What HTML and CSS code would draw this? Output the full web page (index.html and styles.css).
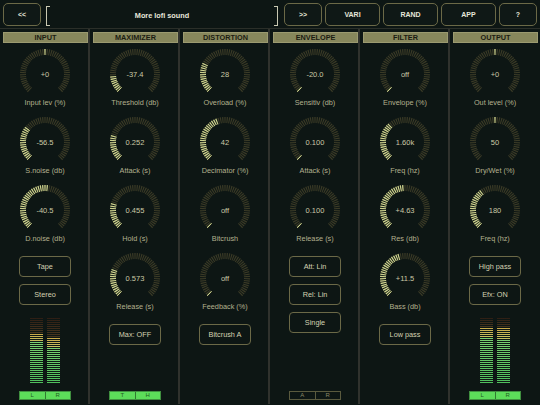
FILE: index.html
```html
<!DOCTYPE html>
<html>

<head>
  <title>Lofi</title>
  <link rel="stylesheet" href="styles.css">
</head>

<body>
  <svg class="defs" width="0" height="0">
    <symbol id="ticks" viewBox="0 0 50 50">
      <path d="M 9.855 40.959 A 22 22 0 1 1 40.145 40.959" fill="none" stroke="currentColor" stroke-width="6" pathLength="273" stroke-dasharray="3 2.4" />
    </symbol>
  </svg>

  <div class="topbar">
    <button class="tbtn narrow">&lt;&lt;</button>
    <div class="preset">
      <span class="brk brk_left"></span>
      <span class="preset_name">More lofi sound</span>
      <span class="brk brk_right"></span>
    </div>
    <button class="tbtn narrow">&gt;&gt;</button>
    <button class="tbtn wide">VARI</button>
    <button class="tbtn wide">RAND</button>
    <button class="tbtn wide">APP</button>
    <button class="tbtn narrow">?</button>
  </div>

  <div class="panel">
    <div class="col">
      <div class="head">INPUT</div>
      <div class="ctl">
        <div class="knob" style="--a:133.8deg;--b:139.2deg"><svg class="ring"><use href="#ticks"/></svg><svg class="ring lit"><use href="#ticks"/></svg><span>+0</span></div>
        <div class="lbl">Input lev (%)</div>
      </div>
      <div class="ctl">
        <div class="knob" style="--a:0deg;--b:85.2deg"><svg class="ring"><use href="#ticks"/></svg><svg class="ring lit"><use href="#ticks"/></svg><span>-56.5</span></div>
        <div class="lbl">S.noise (db)</div>
      </div>
      <div class="ctl">
        <div class="knob" style="--a:0deg;--b:144.6deg"><svg class="ring"><use href="#ticks"/></svg><svg class="ring lit"><use href="#ticks"/></svg><span>-40.5</span></div>
        <div class="lbl">D.noise (db)</div>
      </div>
      <button class="btn first">Tape</button>
      <button class="btn">Stereo</button>
      <div class="foot">
        <div class="meters">
          <div class="bar" style="--top:16px;--mid:24px"></div>
          <div class="bar" style="--top:20px;--mid:29px"></div>
        </div>
        <div class="lr"><span>L</span><span>R</span></div>
      </div>
    </div>

    <div class="col">
      <div class="head">MAXIMIZER</div>
      <div class="ctl">
        <div class="knob" style="--a:0deg;--b:42deg"><svg class="ring"><use href="#ticks"/></svg><svg class="ring lit"><use href="#ticks"/></svg><span>-37.4</span></div>
        <div class="lbl">Threshold (db)</div>
      </div>
      <div class="ctl">
        <div class="knob" style="--a:0deg;--b:63.6deg"><svg class="ring"><use href="#ticks"/></svg><svg class="ring lit"><use href="#ticks"/></svg><span>0.252</span></div>
        <div class="lbl">Attack (s)</div>
      </div>
      <div class="ctl">
        <div class="knob" style="--a:0deg;--b:63.6deg"><svg class="ring"><use href="#ticks"/></svg><svg class="ring lit"><use href="#ticks"/></svg><span>0.455</span></div>
        <div class="lbl">Hold (s)</div>
      </div>
      <div class="ctl">
        <div class="knob" style="--a:0deg;--b:69deg"><svg class="ring"><use href="#ticks"/></svg><svg class="ring lit"><use href="#ticks"/></svg><span>0.573</span></div>
        <div class="lbl">Release (s)</div>
      </div>
      <button class="btn first">Max: OFF</button>
      <div class="foot">
        <div class="lr"><span>T</span><span>H</span></div>
      </div>
    </div>

    <div class="col">
      <div class="head">DISTORTION</div>
      <div class="ctl">
        <div class="knob" style="--a:0deg;--b:74.4deg"><svg class="ring"><use href="#ticks"/></svg><svg class="ring lit"><use href="#ticks"/></svg><span>28</span></div>
        <div class="lbl">Overload (%)</div>
      </div>
      <div class="ctl">
        <div class="knob" style="--a:0deg;--b:117.6deg"><svg class="ring"><use href="#ticks"/></svg><svg class="ring lit"><use href="#ticks"/></svg><span>42</span></div>
        <div class="lbl">Decimator (%)</div>
      </div>
      <div class="ctl">
        <div class="knob" style="--a:0deg;--b:4.2deg"><svg class="ring"><use href="#ticks"/></svg><svg class="ring lit"><use href="#ticks"/></svg><span>off</span></div>
        <div class="lbl">Bitcrush</div>
      </div>
      <div class="ctl">
        <div class="knob" style="--a:0deg;--b:4.2deg"><svg class="ring"><use href="#ticks"/></svg><svg class="ring lit"><use href="#ticks"/></svg><span>off</span></div>
        <div class="lbl">Feedback (%)</div>
      </div>
      <button class="btn first">Bitcrush A</button>
    </div>

    <div class="col">
      <div class="head">ENVELOPE</div>
      <div class="ctl">
        <div class="knob" style="--a:0deg;--b:4.2deg"><svg class="ring"><use href="#ticks"/></svg><svg class="ring lit"><use href="#ticks"/></svg><span>-20.0</span></div>
        <div class="lbl">Sensitiv (db)</div>
      </div>
      <div class="ctl">
        <div class="knob" style="--a:0deg;--b:4.2deg"><svg class="ring"><use href="#ticks"/></svg><svg class="ring lit"><use href="#ticks"/></svg><span>0.100</span></div>
        <div class="lbl">Attack (s)</div>
      </div>
      <div class="ctl">
        <div class="knob" style="--a:0deg;--b:4.2deg"><svg class="ring"><use href="#ticks"/></svg><svg class="ring lit"><use href="#ticks"/></svg><span>0.100</span></div>
        <div class="lbl">Release (s)</div>
      </div>
      <button class="btn first">Att: Lin</button>
      <button class="btn">Rel: Lin</button>
      <button class="btn">Single</button>
      <div class="foot">
        <div class="lr off"><span>A</span><span>R</span></div>
      </div>
    </div>

    <div class="col">
      <div class="head">FILTER</div>
      <div class="ctl">
        <div class="knob" style="--a:0deg;--b:4.2deg"><svg class="ring"><use href="#ticks"/></svg><svg class="ring lit"><use href="#ticks"/></svg><span>off</span></div>
        <div class="lbl">Envelope (%)</div>
      </div>
      <div class="ctl">
        <div class="knob" style="--a:0deg;--b:96deg"><svg class="ring"><use href="#ticks"/></svg><svg class="ring lit"><use href="#ticks"/></svg><span>1.60k</span></div>
        <div class="lbl">Freq (hz)</div>
      </div>
      <div class="ctl">
        <div class="knob" style="--a:0deg;--b:133.8deg"><svg class="ring"><use href="#ticks"/></svg><svg class="ring lit"><use href="#ticks"/></svg><span>+4.63</span></div>
        <div class="lbl">Res (db)</div>
      </div>
      <div class="ctl">
        <div class="knob" style="--a:0deg;--b:123deg"><svg class="ring"><use href="#ticks"/></svg><svg class="ring lit"><use href="#ticks"/></svg><span>+11.5</span></div>
        <div class="lbl">Bass (db)</div>
      </div>
      <button class="btn first">Low pass</button>
    </div>

    <div class="col">
      <div class="head">OUTPUT</div>
      <div class="ctl">
        <div class="knob" style="--a:133.8deg;--b:139.2deg"><svg class="ring"><use href="#ticks"/></svg><svg class="ring lit"><use href="#ticks"/></svg><span>+0</span></div>
        <div class="lbl">Out level (%)</div>
      </div>
      <div class="ctl">
        <div class="knob" style="--a:133.8deg;--b:139.2deg"><svg class="ring"><use href="#ticks"/></svg><svg class="ring lit"><use href="#ticks"/></svg><span>50</span></div>
        <div class="lbl">Dry/Wet (%)</div>
      </div>
      <div class="ctl">
        <div class="knob" style="--a:0deg;--b:101.4deg"><svg class="ring"><use href="#ticks"/></svg><svg class="ring lit"><use href="#ticks"/></svg><span>180</span></div>
        <div class="lbl">Freq (hz)</div>
      </div>
      <button class="btn first">High pass</button>
      <button class="btn">Efx: ON</button>
      <div class="foot">
        <div class="meters">
          <div class="bar" style="--top:9px;--mid:20px"></div>
          <div class="bar" style="--top:10px;--mid:21px"></div>
        </div>
        <div class="lr"><span>L</span><span>R</span></div>
      </div>
    </div>
  </div>
</body>

</html>
```

FILE: styles.css
```css
body {
  margin: 0;
  width: 540px;
  height: 405px;
  overflow: hidden;
  background-color: #0d1614;
  font-family: "Liberation Sans", Arial, sans-serif;
}
.defs {
  position: absolute;
  width: 0;
  height: 0;
}

/* top bar */
.topbar {
  display: flex;
  gap: 3px;
  height: 29px;
  padding: 3px 3px 0 3px;
  box-sizing: border-box;
  border-bottom: 1px solid #2b2f29;
}
.tbtn {
  height: 23px;
  padding: 0;
  background-color: #0f1816;
  border: 1px solid #6b6947;
  border-radius: 5px;
  color: #e6e6da;
  font-family: inherit;
  font-size: 7px;
  font-weight: bold;
}
.narrow {
  width: 38px;
}
.wide {
  width: 55px;
}
.preset {
  flex: 1;
  display: flex;
  align-items: center;
  padding: 0 3px 0 2px;
}
.brk {
  width: 3px;
  height: 18px;
  border: 1.5px solid #c9c8b2;
}
.brk_left {
  border-right: none;
}
.brk_right {
  border-left: none;
}
.preset_name {
  flex: 1;
  text-align: center;
  color: #e8e8dc;
  font-size: 7.3px;
  font-weight: bold;
}

/* columns */
.panel {
  display: grid;
  grid-template-columns: repeat(6, 90px);
  height: 375px;
}
.col {
  display: flex;
  flex-direction: column;
  align-items: center;
  padding-bottom: 4px;
  box-sizing: border-box;
  box-shadow: inset -2px 0 #30322d;
}
.col:last-child {
  box-shadow: none;
}
.head {
  align-self: stretch;
  margin: 3px 2px 6px 3px;
  height: 11px;
  box-sizing: border-box;
  background-color: #87875c;
  border: 1px solid #9b9a70;
  color: #1b1c12;
  font-size: 7.3px;
  font-weight: bold;
  line-height: 9px;
  text-align: center;
}

/* knobs: 51 ticks over the arc, the lit copy is masked to the value */
.ctl {
  display: flex;
  flex-direction: column;
  align-items: center;
  margin-bottom: 9px;
}
.knob {
  position: relative;
  width: 50px;
  height: 50px;
  display: flex;
  align-items: center;
  justify-content: center;
  color: #cbc9a6;
  font-size: 7.5px;
}
.knob span {
  position: relative;
}
.ring {
  position: absolute;
  left: 0;
  top: 0;
  width: 50px;
  height: 50px;
  color: #3a3a26;
}
.ring.lit {
  color: #cdd38f;
  -webkit-mask: conic-gradient(from 223.5deg, transparent 0deg var(--a), #000 var(--a) var(--b), transparent var(--b));
  mask: conic-gradient(from 223.5deg, transparent 0deg var(--a), #000 var(--a) var(--b), transparent var(--b));
}
.lbl {
  margin-top: -1px;
  line-height: 10px;
  color: #b3b18e;
  font-size: 7.3px;
}

/* buttons */
.btn {
  width: 52px;
  height: 21px;
  margin-bottom: 7px;
  padding: 0;
  background-color: transparent;
  border: 1px solid #6b6947;
  border-radius: 4px;
  color: #d4d2b2;
  font-family: inherit;
  font-size: 7.3px;
}
.btn.first {
  margin-top: 3px;
}

/* meters */
.foot {
  margin-top: auto;
  display: flex;
  flex-direction: column;
  align-items: center;
}
.meters {
  display: flex;
  gap: 4px;
  margin-bottom: 8px;
}
.bar {
  width: 13px;
  height: 65px;
  background:
    repeating-linear-gradient(to bottom, transparent 0 1.3px, #0d1614 1.3px 2px),
    linear-gradient(to bottom, #2e1e14 0, #4a3820 var(--top), #c9a848 var(--top), #c4c060 var(--mid), #7ad070 var(--mid), #4fbf5c 100%);
}
.lr {
  display: flex;
  width: 52px;
  height: 9px;
  box-sizing: border-box;
  border: 1px solid #3f8f3f;
}
.lr span {
  flex: 1;
  background-color: #5cdc5a;
  color: #235a23;
  font-size: 6px;
  line-height: 7px;
  text-align: center;
}
.lr span + span {
  border-left: 1px solid #2f7a2f;
}
.lr.off {
  border-color: #5a5a3e;
}
.lr.off span {
  background-color: transparent;
  color: #8a8866;
}
.lr.off span + span {
  border-left-color: #5a5a3e;
}
```
